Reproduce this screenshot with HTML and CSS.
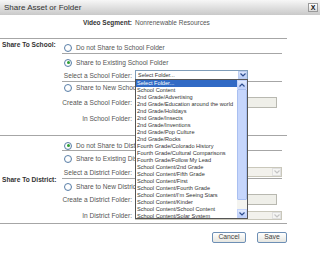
FILE: index.html
```html
<!DOCTYPE html>
<html lang="en">
<head>
    <meta charset="UTF-8">
    <title>Share Asset or Folder</title>
    <link rel="stylesheet" href="styles.css">
</head>
<body>
    <div class="titlebar">
        <span class="title">Share Asset or Folder</span>
        <span class="close">X</span>
    </div>

    <div class="segment">
        <span class="seg-label">Video Segment:</span>
        <span class="seg-value">Nonrenewable Resources</span>
    </div>

    <!-- school section -->
    <div class="section school">
        <div class="section-label">Share To School:</div>
        <div class="options">
            <div class="opt opt-a">
                <label class="radio-row"><span class="radio"></span>Do not Share to School Folder</label>
            </div>
            <div class="opt opt-b">
                <label class="radio-row"><span class="radio checked"></span>Share to Existing School Folder</label>
                <div class="field field-select">
                    <span class="field-label">Select a School Folder:</span>
                    <div class="select active">
                        <span class="select-text">Select Folder...</span>
                        <span class="arrow"><svg width="6" height="4" viewBox="0 0 6 4"><polyline points="0.5,0.5 3,3 5.5,0.5" fill="none" stroke="#2d4d8e" stroke-width="1.2"/></svg></span>
                        <ul class="dropdown" id="folder-list"></ul>
                    </div>
                </div>
            </div>
            <div class="opt opt-c">
                <label class="radio-row"><span class="radio"></span>Share to New School Folder</label>
                <div class="field field-input">
                    <span class="field-label">Create a School Folder:</span>
                    <span class="input"></span>
                </div>
                <div class="field field-in">
                    <span class="field-label">In School Folder:</span>
                    <span class="select disabled short"></span>
                </div>
            </div>
        </div>
    </div>

    <!-- district section -->
    <div class="section district">
        <div class="section-label">Share To District:</div>
        <div class="options">
            <div class="opt opt-a">
                <label class="radio-row"><span class="radio checked"></span>Do not Share to District Folder</label>
            </div>
            <div class="opt opt-b">
                <label class="radio-row"><span class="radio"></span>Share to Existing District Folder</label>
                <div class="field field-select">
                    <span class="field-label">Select a District Folder:</span>
                    <span class="select disabled">
                        <span class="arrow"><svg width="6" height="4" viewBox="0 0 6 4"><polyline points="0.5,0.5 3,3 5.5,0.5" fill="none" stroke="#c4c4c4" stroke-width="1.2"/></svg></span>
                    </span>
                </div>
            </div>
            <div class="opt opt-c">
                <label class="radio-row"><span class="radio"></span>Share to New District Folder</label>
                <div class="field field-input">
                    <span class="field-label">Create a District Folder:</span>
                    <span class="input"></span>
                </div>
                <div class="field field-in">
                    <span class="field-label">In District Folder:</span>
                    <span class="select disabled">
                        <span class="arrow"><svg width="6" height="4" viewBox="0 0 6 4"><polyline points="0.5,0.5 3,3 5.5,0.5" fill="none" stroke="#c4c4c4" stroke-width="1.2"/></svg></span>
                    </span>
                </div>
            </div>
        </div>
    </div>

    <div class="buttons">
        <button class="btn">Cancel</button>
        <button class="btn">Save</button>
    </div>

    <script>
        // folders shown in the open dropdown
        var folders = [
            'Select Folder...',
            'School Content',
            '2nd Grade/Advertising',
            '2nd Grade/Education around the world',
            '2nd Grade/Holidays',
            '2nd Grade/Insects',
            '2nd Grade/Inventions',
            '2nd Grade/Pop Culture',
            '2nd Grade/Rocks',
            'Fourth Grade/Colorado History',
            'Fourth Grade/Cultural Comparisons',
            'Fourth Grade/Follow My Lead',
            'School Content/2nd Grade',
            'School Content/Fifth Grade',
            'School Content/First',
            'School Content/Fourth Grade',
            "School Content/I'm Seeing Stars",
            'School Content/Kinder',
            'School Content/School Content',
            'School Content/Solar System'
        ];

        var list = document.getElementById('folder-list');
        folders.forEach(function (name, i) {
            var li = document.createElement('li');
            li.textContent = name;
            if (i === 0) li.classList.add('selected');
            list.appendChild(li);
        });

        // fake scrollbar on the right of the list
        var bar = document.createElement('div');
        bar.className = 'scrollbar';
        bar.innerHTML = '<span class="sb-btn"><svg width="6" height="4" viewBox="0 0 6 4"><polyline points="0.5,3.5 3,1 5.5,3.5" fill="none" stroke="#2d4d8e" stroke-width="1.2"/></svg></span>' +
            '<span class="sb-thumb"></span><span class="sb-track"></span>' +
            '<span class="sb-btn"><svg width="6" height="4" viewBox="0 0 6 4"><polyline points="0.5,0.5 3,3 5.5,0.5" fill="none" stroke="#2d4d8e" stroke-width="1.2"/></svg></span>';
        list.appendChild(bar);
    </script>
</body>
</html>
```
FILE: styles.css
```css
body {
    margin: 0;
    padding: 0;
    background-color: #fff;
    font-family: "Liberation Sans", Arial, sans-serif;
    font-size: 6.6px;
    color: #555;
    width: 320px;
    height: 266px;
    overflow: hidden;
}

.titlebar {
    height: 15px;
    display: flex;
    align-items: center;
    justify-content: space-between;
    padding: 0 2px 0 4px;
    background: linear-gradient(#f7f7f7, #c9c9c9);
    box-sizing: border-box;
}

.title {
    font-size: 8px;
    color: #333;
}

.close {
    width: 10px;
    height: 9px;
    box-sizing: border-box;
    border: 1px solid #9a9a9a;
    background: linear-gradient(#ffffff, #dcdcdc);
    font-size: 7px;
    font-weight: bold;
    color: #111;
    display: flex;
    align-items: center;
    justify-content: center;
    line-height: 1;
}

.segment {
    height: 23px;
    display: flex;
    padding-top: 4px;
    box-sizing: border-box;
    font-size: 6.5px;
}

.seg-label {
    width: 135px;
    text-align: right;
    font-weight: bold;
    color: #333;
    padding-right: 3px;
    box-sizing: border-box;
}

.section {
    width: 287px;
    display: flex;
    border-top: 1px solid #a6a6a6;
}

.district {
    border-bottom: 1px solid #a6a6a6;
}

.section-label {
    width: 62px;
    padding-left: 2px;
    box-sizing: border-box;
    font-weight: bold;
    color: #333;
    white-space: nowrap;
}

.school .section-label {
    padding-top: 2px;
}

.district .section-label {
    align-self: center;
}

.options {
    flex: 1;
    padding-right: 5px;
}

.opt {
    border-bottom: 1px solid #a6a6a6;
}

.opt-c {
    border-bottom: none;
}

.radio-row {
    height: 9px;
    display: flex;
    align-items: center;
    padding-left: 2px;
}

.radio {
    width: 8px;
    height: 8px;
    box-sizing: border-box;
    border: 1px solid #5a7fa8;
    border-radius: 50%;
    background: radial-gradient(circle at 40% 40%, #fff 40%, #dfe6ee);
    margin-right: 4px;
    display: flex;
    align-items: center;
    justify-content: center;
}

.radio.checked::after {
    content: "";
    width: 3px;
    height: 3px;
    border-radius: 50%;
    background: #2f9e34;
}

.field {
    display: flex;
    align-items: center;
}

.field-label {
    width: 70px;
    text-align: right;
    padding-right: 3px;
    white-space: nowrap;
}

/* row spacing, school */
.school .opt-a { padding: 4px 0 1px; }
.school .opt-b { padding: 4px 0 1px; }
.school .opt-b .field { margin-top: 3px; height: 10px; }
.school .opt-c { padding: 1px 0 12px; }
.school .field-input { margin-top: 5px; height: 11px; }
.school .field-in { margin-top: 5px; height: 10px; }

/* row spacing, district */
.district .opt-a { padding: 5px 0 0; }
.district .opt-b { padding: 3px 0 1px; }
.district .opt-b .field { margin-top: 4px; height: 10px; }
.district .opt-c { padding: 3px 0 3px; }
.district .field-input { margin-top: 3px; height: 11px; }
.district .field-in { margin-top: 6px; height: 9px; }

.select {
    position: relative;
    height: 100%;
    box-sizing: border-box;
    display: flex;
    align-items: center;
    justify-content: space-between;
}

.select.active {
    width: 113px;
    border: 1px solid #7f9db9;
    background: #fff;
}

.select-text {
    font-size: 5.5px;
    color: #333;
    padding-left: 2px;
}

.arrow {
    width: 9px;
    height: 100%;
    display: flex;
    align-items: center;
    justify-content: center;
    box-sizing: border-box;
}

.select.active .arrow {
    background: linear-gradient(#dbe6fd, #b9cdf7);
    border: 1px solid #bccdf0;
}

.select.disabled {
    width: 147px;
    border: 1px solid #c9c7ba;
    background: #f2f1ec;
    justify-content: flex-end;
}

.select.disabled.short {
    width: 113px;
}

.select.disabled .arrow {
    border: 1px solid #e0e0e0;
    background: #f5f5f3;
}

.input {
    width: 142px;
    height: 100%;
    box-sizing: border-box;
    border: 1px solid #b8b8b0;
    background: #efefe9;
}

.dropdown {
    position: absolute;
    top: 100%;
    left: -1px;
    width: 113px;
    height: 140px;
    margin: 0;
    padding: 0;
    list-style: none;
    box-sizing: border-box;
    border: 1px solid #555;
    background: #fff;
    z-index: 5;
    overflow: hidden;
}

.dropdown li {
    height: 7px;
    line-height: 7px;
    font-size: 5.6px;
    color: #333;
    padding-left: 1px;
    margin-right: 10px;
    white-space: nowrap;
    overflow: hidden;
}

.dropdown li.selected {
    background: #316ac5;
    color: #fff;
}

.scrollbar {
    position: absolute;
    top: 0;
    right: 0;
    width: 10px;
    height: 100%;
    display: flex;
    flex-direction: column;
    background: #fff;
}

.sb-btn {
    height: 9px;
    display: flex;
    align-items: center;
    justify-content: center;
    background: linear-gradient(#e2ebfe, #bccefa);
    border: 1px solid #c3d3fb;
    box-sizing: border-box;
}

.sb-thumb {
    flex: 1;
    background: #c6d6fc;
    border: 1px solid #a9bff0;
    border-radius: 1px;
}

.sb-track {
    height: 9px;
    background: #f4f4f0;
}

.buttons {
    width: 287px;
    display: flex;
    justify-content: flex-end;
    gap: 11px;
    margin-top: 8px;
}

.btn {
    height: 11px;
    padding: 0;
    font-family: "Liberation Sans", Arial, sans-serif;
    font-size: 6.8px;
    color: #444;
    border: 1px solid #6d8fb5;
    border-radius: 2px;
    background: linear-gradient(#ffffff, #e6e6e0);
    line-height: 1;
}

.btn:first-child {
    width: 34px;
}

.btn:last-child {
    width: 30px;
}
```
